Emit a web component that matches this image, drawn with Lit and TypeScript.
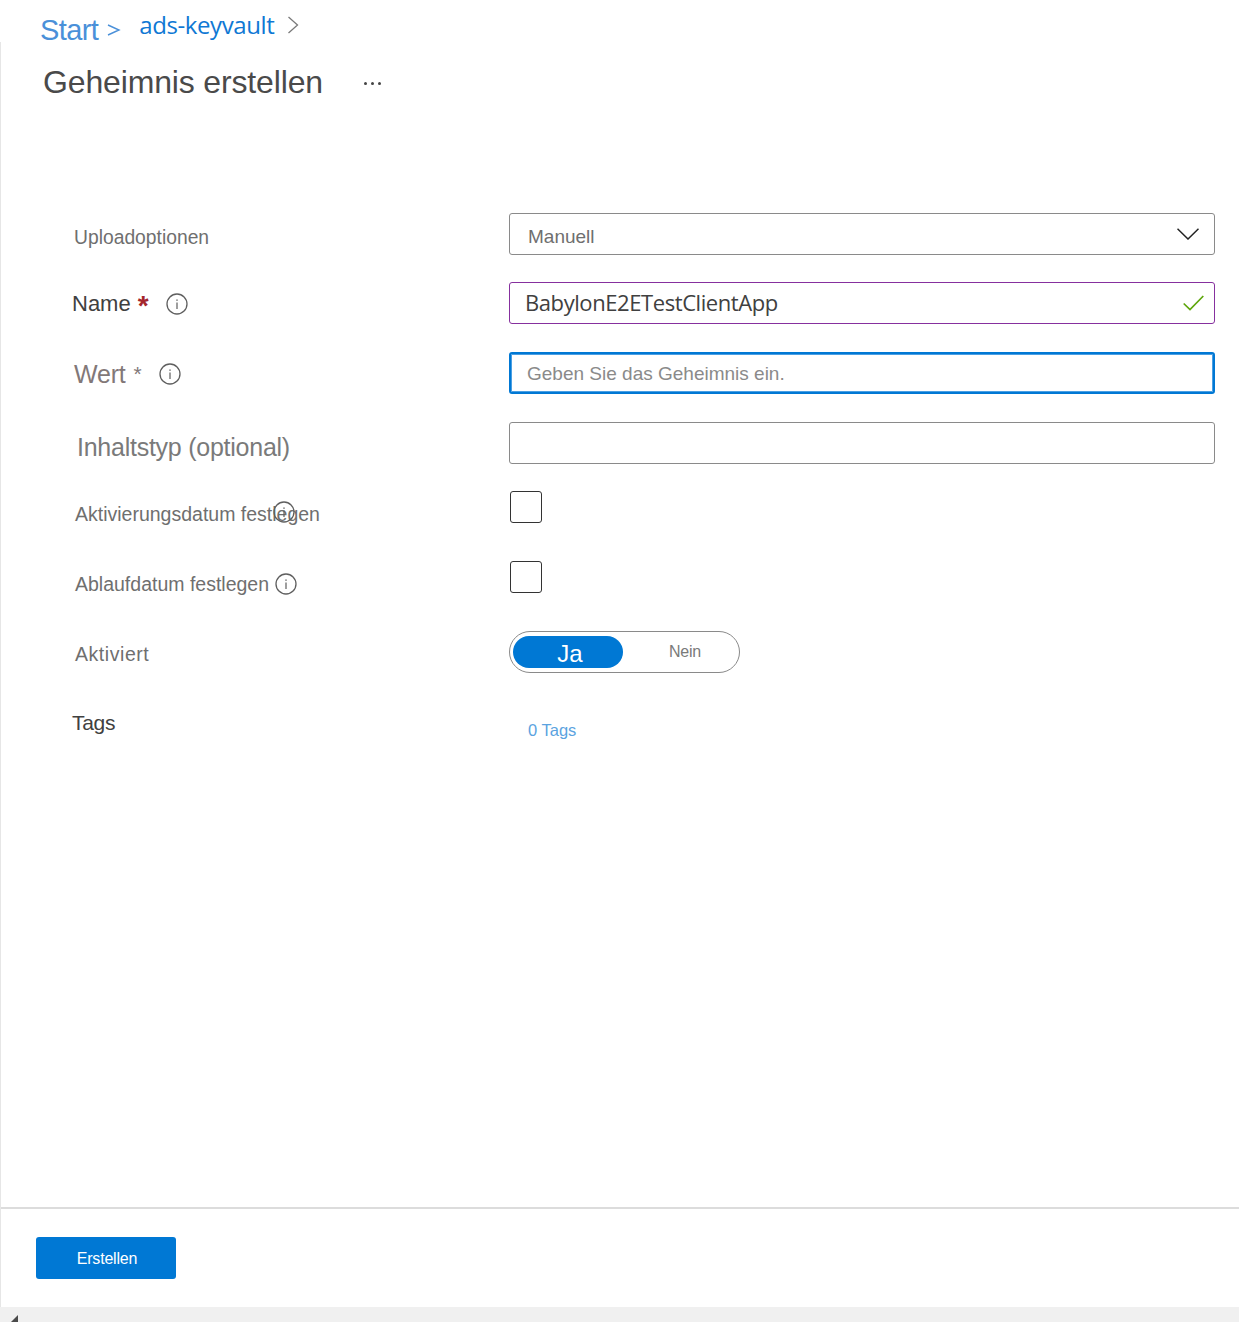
import { LitElement, html, css, svg } from 'lit';
import { customElement } from 'lit/decorators.js';

const infoIcon = svg`<svg class="info" width="22" height="22" viewBox="0 0 22 22" fill="none">
  <circle cx="11" cy="11" r="10" stroke="#5f5f5f" stroke-width="1.3"/>
  <rect x="10.4" y="9.5" width="1.2" height="6.5" fill="#5f5f5f"/>
  <rect x="10.4" y="6.4" width="1.2" height="1.5" fill="#5f5f5f"/>
</svg>`;

@customElement('app-root')
export class AppRoot extends LitElement {
  static styles = css`
    :host {
      display: flex;
      flex-direction: column;
      height: 1322px;
      font-family: "Liberation Sans", Arial, sans-serif;
      background: #fff;
      color: #6f6f6f;
    }

    .crumbs {
      height: 42px;
      display: flex;
      padding-left: 40px;
      box-sizing: border-box;
      flex: none;
    }

    .crumb-start {
      font-size: 29px;
      line-height: 30px;
      margin-top: 15px;
      color: #4a90d9;
      letter-spacing: -0.6px;
    }

    .crumb-sep {
      margin-left: 9px;
      margin-top: 23px;
    }

    .crumb-vault {
      font-family: "Open Sans", sans-serif;
      font-size: 24px;
      line-height: 30px;
      margin-left: 18px;
      margin-top: 10px;
      color: #0f78d4;
      letter-spacing: -0.4px;
    }

    .crumb-next {
      margin-left: 13px;
      margin-top: 16px;
    }

    .panel {
      flex: 1;
      display: flex;
      flex-direction: column;
      border-left: 1px solid #e6e6e6;
      min-height: 0;
    }

    .title-row {
      height: 80px;
      display: flex;
      align-items: center;
      padding-left: 42px;
      flex: none;
    }

    h1 {
      margin: 0;
      font-size: 32px;
      font-weight: 400;
      color: #4a4a4a;
      letter-spacing: -0.15px;
    }

    .more {
      margin-left: 41px;
      margin-top: 3px;
      display: flex;
      gap: 4px;
    }

    .more span {
      width: 3px;
      height: 3px;
      border-radius: 50%;
      background: #444;
    }

    .form {
      flex: 1;
      padding: 91px 24px 0 0;
      display: flex;
      flex-direction: column;
    }

    .row {
      display: grid;
      grid-template-columns: 508px 1fr;
      height: 42px;
      align-items: center;
      margin-bottom: 28px;
    }

    .row.first {
      margin-bottom: 27px;
    }

    .label {
      position: relative;
      display: flex;
      align-items: center;
      font-size: 19.5px;
      color: #6f6f6f;
      white-space: nowrap;
    }

    .upload { padding-left: 73px; padding-top: 8px; font-size: 19.3px; }
    .name { padding-left: 71px; padding-top: 2px; font-size: 22px; color: #404040; }
    .wert { padding-left: 73px; padding-top: 2px; font-size: 25px; color: #827878; letter-spacing: -0.2px; }
    .type { padding-left: 76px; padding-top: 8px; font-size: 25px; color: #7a7a7a; letter-spacing: -0.25px; }
    .plain { padding-left: 74px; padding-top: 2px; }
    .wide { letter-spacing: 0.55px; }
    .tags { padding-left: 71px; font-size: 21px; color: #404040; letter-spacing: -0.3px; }

    .req { color: #a4262c; margin-left: 7px; font-size: 28px; font-weight: 700; line-height: 22px; margin-top: 4px; }
    .req-soft { color: #827878; margin-left: 8px; font-size: 21px; }
    .name .info { margin-left: 17px; }
    .wert .info { margin-left: 17px; }
    .plain .info { margin-left: 6px; }

    .overlap {
      position: absolute;
      left: 266px;
      top: 0;
    }

    .field {
      box-sizing: border-box;
      height: 42px;
      border: 1px solid #8a8a8a;
      border-radius: 3px;
      display: flex;
      align-items: center;
      justify-content: space-between;
      padding: 0 15px 0 18px;
      font-size: 19px;
      color: #6f6f6f;
    }

    .manual {
      padding-top: 5px;
    }

    .field.valid {
      border-color: #86309e;
      padding: 0 10px 0 15px;
      font-family: "Open Sans", sans-serif;
      font-size: 22px;
      color: #404040;
      letter-spacing: -0.42px;
    }

    .field.valid span {
      margin-top: -2px;
    }

    .field.focus {
      border: 2px solid #0078d4;
      box-shadow: inset 0 0 0 1px #4a9fe3;
      padding: 2px 0 0 16px;
      color: #8a8a8a;
    }

    .check {
      box-sizing: border-box;
      width: 32px;
      height: 32px;
      margin-left: 1px;
      align-self: start;
      margin-top: -1px;
      border: 1px solid #333;
      border-radius: 3px;
    }

    .toggle {
      box-sizing: border-box;
      width: 231px;
      height: 42px;
      align-self: start;
      margin-top: -1px;
      border: 1px solid #8a8a8a;
      border-radius: 21px;
      padding: 4px 3px;
      display: flex;
      align-items: center;
    }

    .toggle .on {
      width: 110px;
      height: 32px;
      border-radius: 16px;
      background: #0078d4;
      color: #fff;
      font-size: 24px;
      padding: 3px 0 0 4px;
      box-sizing: border-box;
      display: flex;
      align-items: center;
      justify-content: center;
    }

    .toggle .off {
      flex: 1;
      text-align: center;
      font-size: 16px;
      color: #7a7a7a;
      margin-top: -1px;
      margin-left: 11px;
      letter-spacing: -0.2px;
    }

    .tag-link {
      padding: 14px 0 0 19px;
      font-size: 16.5px;
      color: #5ba3e0;
    }

    .footer {
      height: 100px;
      flex: none;
      box-sizing: border-box;
      border-top: 2px solid #dcdcdc;
      padding: 28px 0 0 35px;
    }

    .create {
      width: 140px;
      height: 42px;
      padding: 2px 0 0 2px;
      border: none;
      border-radius: 3px;
      background: #0078d4;
      color: #fff;
      font: 16px "Liberation Sans", Arial, sans-serif;
      letter-spacing: -0.2px;
    }

    .scrollbar {
      height: 15px;
      flex: none;
      background: #f0f0f0;
      display: flex;
      align-items: flex-end;
      padding-left: 11px;
    }

    .scrollbar span {
      width: 0;
      height: 0;
      border-left: 7px solid transparent;
      border-bottom: 7px solid #4a4a4a;
    }
  `;

  render() {
    return html`
      <nav class="crumbs">
        <span class="crumb-start">Start</span>
        <svg class="crumb-sep" width="14" height="14" viewBox="0 0 14 14" fill="none">
          <path d="M1 2l11 5-11 5" stroke="#4a90d9" stroke-width="1.4"/>
        </svg>
        <span class="crumb-vault">ads-keyvault</span>
        <svg class="crumb-next" width="12" height="18" viewBox="0 0 12 18" fill="none">
          <path d="M1.5 1l9 8-9 8" stroke="#7a7a7a" stroke-width="1.3"/>
        </svg>
      </nav>
      <div class="panel">
        <div class="title-row">
          <h1>Geheimnis erstellen</h1>
          <div class="more"><span></span><span></span><span></span></div>
        </div>
        <div class="form">
          <div class="row first">
            <div class="label upload">Uploadoptionen</div>
            <div class="field">
              <span class="manual">Manuell</span>
              <svg width="22" height="12" viewBox="0 0 22 12" fill="none">
                <path d="M0.5 0.8L11 11L21.5 0.8" stroke="#222" stroke-width="1.5"/>
              </svg>
            </div>
          </div>
          <div class="row">
            <div class="label name">Name<span class="req">*</span>${infoIcon}</div>
            <div class="field valid">
              <span>BabylonE2ETestClientApp</span>
              <svg width="21" height="16" viewBox="0 0 21 16" fill="none">
                <path d="M0.7 8.5L7 14.5L20.3 1" stroke="#5ea60c" stroke-width="1.7"/>
              </svg>
            </div>
          </div>
          <div class="row">
            <div class="label wert">Wert<span class="req-soft">*</span>${infoIcon}</div>
            <div class="field focus">Geben Sie das Geheimnis ein.</div>
          </div>
          <div class="row">
            <div class="label type">Inhaltstyp (optional)</div>
            <div class="field"></div>
          </div>
          <div class="row">
            <div class="label plain">Aktivierungsdatum festlegen<span class="overlap">${infoIcon}</span></div>
            <div class="check"></div>
          </div>
          <div class="row">
            <div class="label plain">Ablaufdatum festlegen${infoIcon}</div>
            <div class="check"></div>
          </div>
          <div class="row">
            <div class="label plain wide">Aktiviert</div>
            <div class="toggle">
              <div class="on">Ja</div>
              <div class="off">Nein</div>
            </div>
          </div>
          <div class="row">
            <div class="label tags">Tags</div>
            <div class="tag-link">0 Tags</div>
          </div>
        </div>
        <div class="footer">
          <button class="create">Erstellen</button>
        </div>
      </div>
      <div class="scrollbar"><span></span></div>
    `;
  }
}
